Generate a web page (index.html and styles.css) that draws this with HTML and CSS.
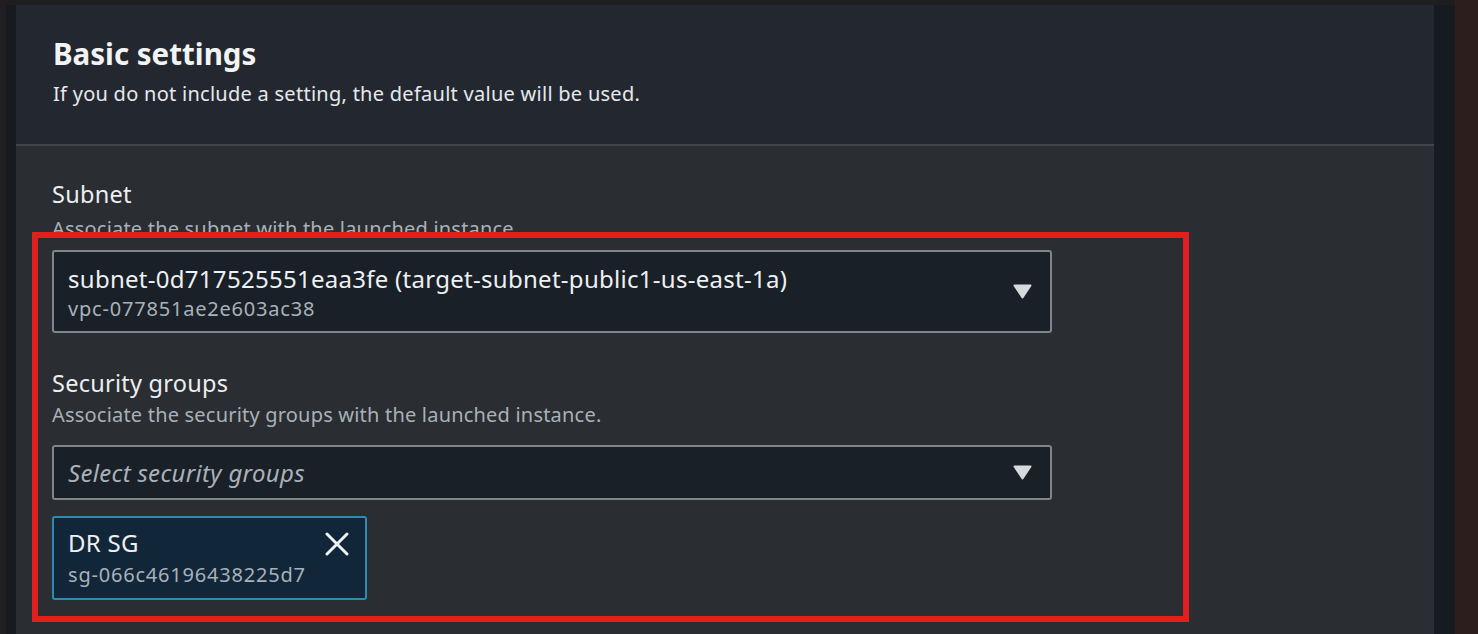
FILE: index.html
```html
<!DOCTYPE html>
<html>
<head>
<meta charset="utf-8">
<link rel="stylesheet" href="styles.css">
</head>
<body>
<div class="page">
  <div class="edge-left"></div>
  <div class="frame">
    <div class="panel">
      <div class="panel-header">
        <h2 class="title">Basic settings</h2>
        <p class="subtitle">If you do not include a setting, the default value will be used.</p>
      </div>
      <div class="panel-body">
        <div class="field field-subnet">
          <div class="label">Subnet</div>
          <div class="desc desc-subnet">Associate the subnet with the launched instance.</div>
          <div class="select select-tall">
            <div class="select-text">
              <div class="opt-main">subnet-0d717525551eaa3fe (target-subnet-public1-us-east-1a)</div>
              <div class="opt-sub">vpc-077851ae2e603ac38</div>
            </div>
            <svg class="caret" width="19" height="15" viewBox="0 0 19 15"><path d="M1.5 1.5 H17.5 L9.5 13.5 Z" fill="#d5dbdb" stroke="#d5dbdb" stroke-width="2" stroke-linejoin="round"/></svg>
          </div>
        </div>
        <div class="field field-sg">
          <div class="label">Security groups</div>
          <div class="desc">Associate the security groups with the launched instance.</div>
          <div class="select select-short">
            <div class="placeholder">Select security groups</div>
            <svg class="caret" width="19" height="15" viewBox="0 0 19 15"><path d="M1.5 1.5 H17.5 L9.5 13.5 Z" fill="#d5dbdb" stroke="#d5dbdb" stroke-width="2" stroke-linejoin="round"/></svg>
          </div>
          <div class="token">
            <div class="token-text">
              <div class="opt-main">DR SG</div>
              <div class="opt-sub token-sub">sg-066c46196438225d7</div>
            </div>
            <svg class="dismiss" width="24" height="24" viewBox="0 0 24 24"><path d="M2 2 L22 22 M22 2 L2 22" stroke="#eef0f1" stroke-width="3" stroke-linecap="round"/></svg>
          </div>
        </div>
        <div class="highlight"></div>
      </div>
    </div>
  </div>
  <div class="edge-right"></div>
</div>
</body>
</html>
```

FILE: styles.css
```css
* { box-sizing: border-box; }
html, body { margin: 0; padding: 0; }
body {
  background: #2b1e1c;
  font-family: "Noto Sans", "Open Sans", "Liberation Sans", sans-serif;
  overflow: hidden;
}
.page {
  display: flex;
  width: 1478px;
  height: 634px;
  background: #1e1e21;
}
.edge-left {
  width: 6px;
  background: #201e21;
}
.frame {
  width: 1449px;
  background: #171b21;
  border-top: 5px solid #1e1e21;
  padding: 0 21px 0 10px;
  display: flex;
}
.edge-right {
  width: 23px;
  background: #2b1e1c;
}
.panel {
  width: 1418px;
  display: flex;
  flex-direction: column;
  background: #2a2d32;
}
.panel-header {
  background: #232830;
  height: 141px;
  padding: 30px 0 0 37px;
  border-bottom: 2px solid #41464c;
}
.title {
  margin: 0;
  font-size: 29.5px;
  line-height: 38px;
  font-weight: 700;
  color: #f2f3f3;
}
.subtitle {
  margin: 8px 0 0;
  font-size: 20px;
  line-height: 26px;
  letter-spacing: 0.27px;
  color: #e6e9ec;
}
.panel-body {
  position: relative;
  flex: 1;
  padding: 33px 0 0 36px;
}
.label {
  font-size: 23.5px;
  line-height: 30px;
  letter-spacing: 0.25px;
  color: #eceef0;
}
.desc {
  font-size: 20px;
  line-height: 26px;
  letter-spacing: 0.2px;
  color: #a9b1b8;
  margin-top: 4px;
}
.desc-subnet { margin-top: 7px; }
.select {
  width: 1000px;
  background: #1a2028;
  border: 2px solid #7d868b;
  border-radius: 3px;
  display: flex;
  justify-content: space-between;
  padding: 0 18px 0 14px;
}
.select-tall {
  height: 83px;
  margin-top: 8px;
  align-items: flex-start;
  padding-top: 12px;
}
.select-short {
  height: 55px;
  margin-top: 17px;
  align-items: center;
}
.caret { display: block; align-self: center; }
.select-tall .caret { margin-top: -12px; }
.field-sg { margin-top: 35px; }
.opt-main {
  font-size: 24px;
  line-height: 30px;
  letter-spacing: 0.28px;
  color: #eef0f2;
}
.opt-sub {
  font-size: 20px;
  line-height: 29px;
  letter-spacing: 0.8px;
  color: #a9b1b8;
}
.token-sub { margin-top: 2px; }
.placeholder {
  font-size: 24px;
  line-height: 30px;
  font-style: italic;
  letter-spacing: 0.3px;
  color: #a9b1b8;
}
.token {
  margin-top: 16px;
  width: 315px;
  height: 84px;
  background: #12263a;
  border: 2px solid #2d8cb3;
  border-radius: 3px;
  display: flex;
  justify-content: space-between;
  align-items: flex-start;
  padding: 10px 16px 0 14px;
}
.dismiss { display: block; margin-top: 4px; }
.highlight {
  position: absolute;
  left: 16px;
  top: 86px;
  width: 1157px;
  height: 390px;
  border: 6px solid #e21f1f;
  pointer-events: none;
}
```
